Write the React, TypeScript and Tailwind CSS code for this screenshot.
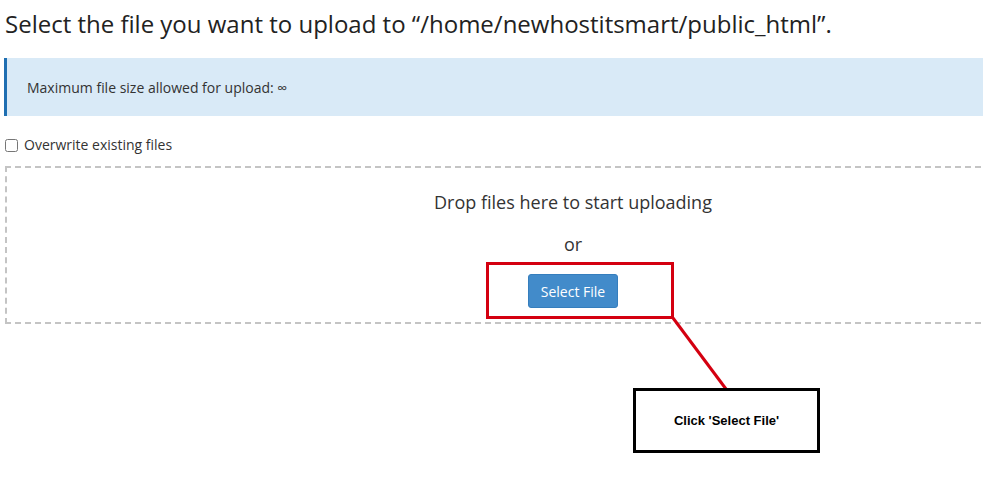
import React from "react";

export default function App() {
  return (
    <div className="relative w-[983px] h-[496px] overflow-hidden bg-white" style={{ fontFamily: '"Open Sans", sans-serif' }}>
      <div className="w-[1141px] pl-[4px] text-[#333]">
        <h1 className="pl-[1px] pt-[6px] text-[24px] leading-[36px] font-normal text-[#222]">
          Select the file you want to upload to “/home/newhostitsmart/public_html”.
        </h1>
        <div className="mt-[16px] h-[58px] flex items-center bg-[#d9eaf7] border-l-[3px] border-[#1f6fb2] pl-[20px] text-[14px] text-[#333]">
          Maximum file size allowed for upload: ∞
        </div>
        <label className="mt-[19px] flex items-center gap-[6px] pl-[1px] text-[14px] text-[#333] leading-[20px]">
          <input type="checkbox" className="m-0 w-[13px] h-[13px]" />
          Overwrite existing files
        </label>
        <div className="mt-[11px] ml-[1px] h-[158px] border-2 border-dashed border-[#c4c4c4] flex flex-col items-center">
          <div className="mt-[21px] text-[18px] leading-[26px] text-[#333]">Drop files here to start uploading</div>
          <div className="mt-[16px] text-[18px] leading-[26px] text-[#333]">or</div>
          <button className="mt-[17px] w-[90px] h-[34px] rounded-[3px] bg-[#428bca] border border-[#357ebd] text-white text-[14px]">
            Select File
          </button>
        </div>
      </div>

      <div className="absolute left-[486px] top-[262px] w-[188px] h-[57px] border-[3px] border-[#d40010]" />
      <svg className="absolute left-0 top-0" width="983" height="496">
        <line x1="673" y1="318" x2="726" y2="389" stroke="#d40010" strokeWidth="3" />
      </svg>
      <div className="absolute left-[633px] top-[388px] w-[187px] h-[65px] border-[3px] border-black bg-white flex items-center justify-center">
        <span className="text-[13px] font-bold text-black" style={{ fontFamily: '"Liberation Sans", sans-serif' }}>
          Click 'Select File'
        </span>
      </div>
    </div>
  );
}
